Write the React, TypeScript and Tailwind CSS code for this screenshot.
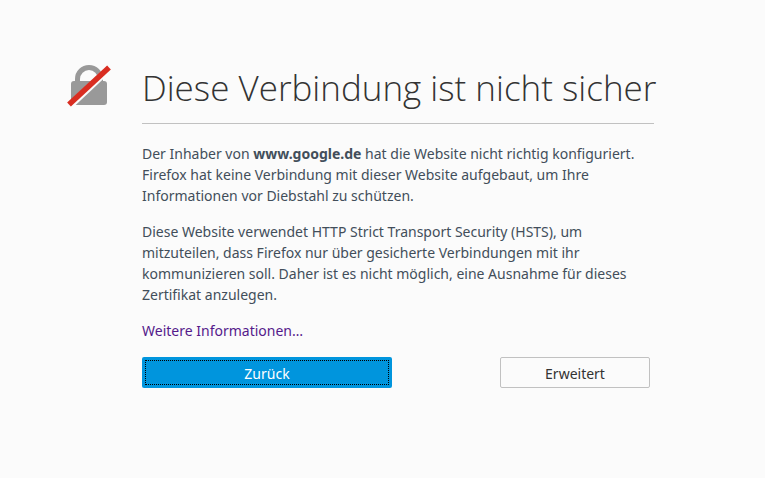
import React, { useState } from 'react';

function InsecureLock() {
  return (
    <svg viewBox="0 0 44 44" className="h-11 w-11 shrink-0" aria-hidden="true">
      <path
        d="M10.500 20v-5a11 11 0 0 1 23 0v5"
        fill="none"
        stroke="#999"
        strokeWidth="5"
      />
      <rect x="4" y="17" width="36" height="24" rx="3" fill="#999" />
      <path d="M2 42.500 43.500 3.500" stroke="#fbfbfb" strokeWidth="7" />
      <path d="M2 40.500 42 3.500" stroke="#d92d21" strokeWidth="5.500" />
    </svg>
  );
}

export default function App() {
  const [showAdvanced, setShowAdvanced] = useState(false);

  return (
    <main className="flex min-h-screen justify-center bg-[#fbfbfb] pl-[67px] pr-[111px] pt-16 font-['Noto_Sans','Open_Sans',sans-serif] text-[14px] leading-[21px] text-[#424e5a]">
      <div className="flex w-full max-w-[587px] items-start gap-[31px]">
        <InsecureLock />
        <div className="min-w-0 flex-1">
          <h1 className="border-b border-[#c1c1c1] pb-3 font-['Open_Sans','Noto_Sans',sans-serif] text-[35px] font-light leading-[47px] whitespace-nowrap text-[#333]">
            Diese Verbindung ist nicht sicher
          </h1>

          <p className="mt-[19px]">
            Der Inhaber von <b>www.google.de</b> hat die Website nicht richtig
            konfiguriert. Firefox hat keine Verbindung mit dieser Website
            aufgebaut, um Ihre Informationen vor Diebstahl zu schützen.
          </p>
          <p className="mt-[15px]">
            Diese Website verwendet HTTP Strict Transport Security (HSTS), um
            mitzuteilen, dass Firefox nur über gesicherte Verbindungen mit ihr
            kommunizieren soll. Daher ist es nicht möglich, eine Ausnahme für
            dieses Zertifikat anzulegen.
          </p>
          <p className="mt-[15px]">
            <a href="#info" className="text-[#551a8b]">
              Weitere Informationen…
            </a>
          </p>

          <div className="mt-4 mr-1 flex justify-between">
            <button
              type="button"
              className="h-[31px] w-[250px] rounded-xs bg-[#0095dd] p-[3px] text-white"
              onClick={() => window.history.back()}
            >
              <span className="flex h-full items-center justify-center border border-dotted border-black pt-px">
                Zurück
              </span>
            </button>
            <button
              type="button"
              className="h-[31px] w-[150px] rounded-xs border border-[#c1c1c1] pt-px text-[#333]"
              aria-pressed={showAdvanced}
              onClick={() => setShowAdvanced(!showAdvanced)}
            >
              Erweitert
            </button>
          </div>
        </div>
      </div>
    </main>
  );
}
